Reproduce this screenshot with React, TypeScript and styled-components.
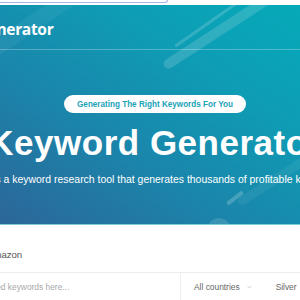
import React from "react";
import styled, { createGlobalStyle } from "styled-components";

const GlobalStyle = createGlobalStyle`
  html, body { margin: 0; padding: 0; background: #ffffff; overflow: hidden; }
  body { font-family: "Liberation Sans", Arial, sans-serif; }
`;

const Page = styled.div`
  width: 310px;
  display: flex;
  flex-direction: column;
`;

const TopStrip = styled.div`
  height: 5px;
  background: #ffffff;
`;

const FocusOutline = styled.div`
  margin-left: -6px;
  width: 172px;
  height: 2px;
  border: 1px solid #a9b6ee;
  border-top: none;
  border-radius: 0 0 4px 4px;
`;

const Hero = styled.section`
  position: relative;
  overflow: hidden;
  height: 219px;
  border-bottom: 1px solid rgba(160, 220, 235, 0.75);
  background: linear-gradient(33deg, #2c6699 0%, #1a86ab 38%, #0e9db5 70%, #05aab9 100%);
`;

const Header = styled.header`
  height: 44px;
  display: flex;
  align-items: flex-end;
  border-bottom: 1px solid rgba(255, 255, 255, 0.28);
`;

const Logo = styled.div`
  margin-left: -93px;
  margin-bottom: 9px;
  font-family: "Open Sans", sans-serif;
  font-weight: 700;
  font-size: 15.5px;
  letter-spacing: -0.3px;
  color: #ffffff;
  white-space: nowrap;
`;

const Stripe = styled.span<{ $w: number; $t: number; $a: number }>`
  position: absolute;
  height: ${(p) => p.$t}px;
  width: ${(p) => p.$w}px;
  border-radius: ${(p) => p.$t}px;
  background: rgba(255, 255, 255, ${(p) => p.$a});
  transform-origin: center;
  pointer-events: none;
`;

const Blob = styled.span`
  position: absolute;
  width: 24px;
  height: 24px;
  border-radius: 50%;
  background: rgba(255, 255, 255, 0.13);
`;

const Content = styled.div`
  position: relative;
  display: flex;
  flex-direction: column;
  align-items: center;
  padding-top: 45px;
`;

const Pill = styled.div`
  height: 18px;
  padding: 0 13px;
  display: flex;
  align-items: center;
  border-radius: 9px;
  background: #ffffff;
  color: #1aa2b8;
  font-weight: 700;
  font-size: 8.15px;
  white-space: nowrap;
`;

const Title = styled.h1`
  margin: 13px 0 0;
  font-size: 35px;
  line-height: 34px;
  letter-spacing: 0.5px;
  font-weight: 700;
  color: #ffffff;
  white-space: nowrap;
`;

const Subtitle = styled.p`
  margin: 14px 0 0;
  font-size: 10.45px;
  line-height: 12px;
  color: #ffffff;
  white-space: nowrap;
`;

const TabRow = styled.div`
  height: 36px;
  padding-top: 11px;
  display: flex;
  align-items: center;
  border-bottom: 1px solid #ececec;
`;

const Tab = styled.span`
  margin-left: -13px;
  font-size: 9.6px;
  color: #555555;
`;

const SearchRow = styled.div`
  height: 28px;
  display: grid;
  grid-template-columns: 180px 1fr;
  align-items: center;
`;

const Input = styled.div`
  margin-left: -35px;
  font-size: 8.4px;
  color: #a8a8a8;
  white-space: nowrap;
`;

const Options = styled.div`
  height: 100%;
  display: flex;
  align-items: center;
  padding-left: 13px;
  border-left: 1px solid #efefef;
  font-size: 8.4px;
  color: #666666;
`;

const Select = styled.span`
  display: flex;
  align-items: center;
  gap: 7px;
  margin-right: 24px;
`;

const Chevron = styled.svg`
  width: 5px;
  height: 4px;
`;

export default function App() {
  return (
    <>
      <GlobalStyle />
      <Page>
        <TopStrip>
          <FocusOutline />
        </TopStrip>
        <Hero>
          <Stripe $w={150} $t={16} $a={0.05} style={{ left: -45, top: 12, transform: "rotate(-34deg)" }} />
          <Stripe $w={130} $t={10} $a={0.15} style={{ left: 154, top: 21, transform: "rotate(-33deg)" }} />
          <Stripe $w={90} $t={3} $a={0.17} style={{ left: 167, top: 14, transform: "rotate(-35deg)" }} />
          <Stripe $w={20} $t={4} $a={0.2} style={{ left: 225, top: 191, transform: "rotate(-38deg)" }} />
          <Stripe $w={80} $t={9} $a={0.06} style={{ left: 232, top: 172, transform: "rotate(-33deg)" }} />
          <Blob style={{ left: 207, top: 213 }} />
          <Header>
            <Logo>Keyword Generator</Logo>
          </Header>
          <Content>
            <Pill>Generating The Right Keywords For You</Pill>
            <Title>Keyword Generator</Title>
            <Subtitle>
              Keyword Generator is a keyword research tool that generates thousands of profitable keywords for your brand.
            </Subtitle>
          </Content>
        </Hero>
        <TabRow>
          <Tab>Amazon</Tab>
        </TabRow>
        <SearchRow>
          <Input>Enter seed keywords here...</Input>
          <Options>
            <Select>
              All countries
              <Chevron viewBox="0 0 5 4">
                <path d="M0.5 1 L2.5 3 L4.5 1" stroke="#c4c4c4" strokeWidth="0.8" fill="none" />
              </Chevron>
            </Select>
            <span>Silver</span>
          </Options>
        </SearchRow>
      </Page>
    </>
  );
}
